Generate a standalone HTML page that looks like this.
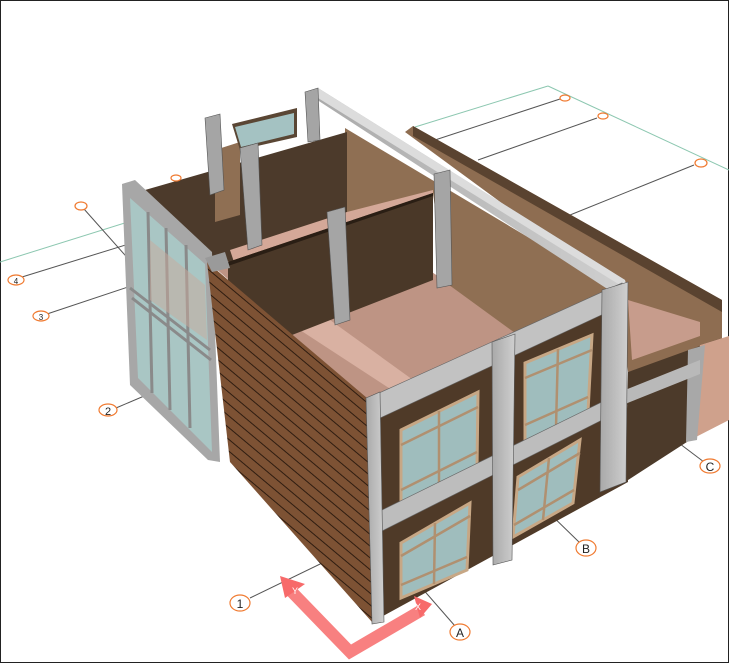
<!DOCTYPE html>
<html><head><meta charset="utf-8"><style>
html,body{margin:0;padding:0;background:#fff;}
svg{display:block}
text{font-family:"Liberation Sans",sans-serif;}
</style></head><body>
<svg width="729" height="663" viewBox="0 0 729 663" xmlns="http://www.w3.org/2000/svg">
<defs>
<pattern id="brick" patternUnits="userSpaceOnUse" width="10" height="9" patternTransform="rotate(40)">
<rect width="10" height="9" fill="#7d5234"/>
<line x1="0" y1="0.5" x2="10" y2="0.5" stroke="#2e1c10" stroke-width="1"/>
</pattern>
<linearGradient id="conc" x1="0" y1="0" x2="1" y2="0"><stop offset="0" stop-color="#a9a9a9"/><stop offset="1" stop-color="#cfcfcf"/></linearGradient>
</defs>
<rect x="0.5" y="0.5" width="728" height="662" fill="#fff" stroke="#222"/>
<g stroke="#8cc7b0" stroke-width="1" fill="none">
<line x1="0" y1="262" x2="128" y2="222"/>
<line x1="415" y1="127" x2="548" y2="86"/>
<line x1="548" y1="86" x2="729" y2="170"/>
</g>
<g stroke="#555" stroke-width="1" fill="none">
<line x1="22" y1="277" x2="132" y2="243"/>
<line x1="47" y1="314" x2="140" y2="283"/>
<line x1="116" y1="408" x2="170" y2="385"/>
<line x1="84" y1="209" x2="140" y2="272"/>
<line x1="560" y1="99" x2="435" y2="140"/>
<line x1="597" y1="118" x2="478" y2="160"/>
<line x1="694" y1="165" x2="570" y2="215"/>
<line x1="250" y1="598" x2="380" y2="535"/>
<line x1="455" y1="626" x2="380" y2="540"/>
<line x1="580" y1="543" x2="505" y2="470"/>
<line x1="704" y1="462" x2="615" y2="395"/>
</g>
<polygon points="405,132 413,126 722,300 722,345 628,372 620,290" fill="#8e6d51"/>
<polygon points="413,126 722,300 722,312 413,136" fill="#5a4330"/>
<polygon points="628,300 700,322 700,336 632,360" fill="#c79c8c"/>
<polygon points="628,372 722,338 700,345 690,440 625,482" fill="#4c3a2a"/>
<polygon points="700,345 729,336 729,420 690,440" fill="#cfa18c"/>
<polygon points="688,350 705,345 697,440 686,442" fill="#a8a8a8"/>
<polygon points="625,390 700,360 700,374 625,404" fill="#b9b9b9"/>
<polygon points="208,262 345,215 520,330 368,400" fill="#be9484"/>
<polygon points="300,330 330,320 420,385 395,392" fill="#d9b1a2"/>
<polygon points="345,128 620,292 515,333 445,282 433,193 345,218" fill="#8f6f53"/>
<polygon points="145,190 347,132 347,212 232,262 150,250" fill="#4c3a2b"/>
<polygon points="215,150 240,142 240,215 215,222" fill="#8f6f53"/>
<polygon points="232,124 297,108 297,137 240,150" fill="#5a4634"/>
<polygon points="235,127 294,113 294,134 241,147" fill="#a4c2c2"/>
<polygon points="230,250 347,212 433,190 433,205 235,265" fill="#d4a898"/>
<polygon points="228,262 433,193 433,280 292,335 228,330" fill="#4a3828"/>
<polygon points="228,262 433,193 433,196 228,266" fill="#2a1e14"/>
<polygon points="305,92 318,88 625,280 612,292" fill="url(#conc)"/>
<polygon points="318,88 625,280 628,290 318,98" fill="#dcdcdc"/>
<g fill="#a5a5a5" stroke="#555" stroke-width="0.6">
<polygon points="205,118 220,114 224,190 210,195"/>
<polygon points="240,148 258,143 262,245 248,250"/>
<polygon points="305,92 318,88 320,140 308,142"/>
<polygon points="327,212 345,207 350,320 335,325"/>
<polygon points="434,174 450,170 452,285 437,288"/>
</g>
<polygon points="122,184 135,180 212,252 220,462 208,460 130,385" fill="#a7a7a7"/>
<polygon points="130,198 205,264 212,452 138,378" fill="#a9c6c4"/>
<g stroke="#8a8a8a" stroke-width="3" fill="none">
<line x1="148" y1="212" x2="152" y2="393"/>
<line x1="166" y1="228" x2="170" y2="410"/>
<line x1="186" y1="245" x2="190" y2="428"/>
<line x1="130" y1="288" x2="210" y2="350"/>
<line x1="132" y1="298" x2="211" y2="360"/>
</g>
<polygon points="150,240 205,285 207,340 150,300" fill="#c9a99c" opacity="0.5"/>
<polygon points="207,262 367,398 372,622 230,462" fill="url(#brick)"/>
<polygon points="205,258 225,252 230,268 212,272" fill="#9a9a9a"/>
<polygon points="368,400 625,285 628,482 372,622" fill="#4f3a28"/>
<g stroke="#c7a785" stroke-width="3" fill="#9fbdbd">
<polygon points="401,430 478,392 477,468 401,508"/>
<polygon points="525,363 592,335 588,412 525,442"/>
<polygon points="401,543 470,503 467,570 401,598"/>
<polygon points="518,477 580,440 573,503 513,537"/>
</g>
<g stroke="#b09070" stroke-width="2.5">
<line x1="439" y1="411" x2="439" y2="488"/><line x1="401" y1="445" x2="478" y2="407"/><line x1="401" y1="490" x2="477" y2="452"/>
<line x1="558" y1="349" x2="556" y2="427"/><line x1="525" y1="378" x2="592" y2="350"/><line x1="525" y1="425" x2="588" y2="397"/>
<line x1="435" y1="523" x2="434" y2="584"/><line x1="401" y1="556" x2="470" y2="516"/><line x1="401" y1="585" x2="467" y2="557"/>
<line x1="549" y1="458" x2="543" y2="520"/><line x1="518" y1="490" x2="580" y2="453"/><line x1="514" y1="525" x2="574" y2="490"/>
</g>
<polygon points="368,398 622,283 625,304 380,418" fill="#c2c2c2" stroke="#666" stroke-width="0.6"/>
<polygon points="378,512 610,398 610,416 380,532" fill="#bdbdbd" stroke="#666" stroke-width="0.6"/>
<g fill="url(#conc)" stroke="#555" stroke-width="0.6">
<polygon points="366,398 380,392 384,622 372,624"/>
<polygon points="492,342 515,334 512,560 493,565"/>
<polygon points="602,290 628,282 626,482 600,492"/>
</g>
<g fill="#fff" stroke="#f07a30" stroke-width="1.2">
<ellipse cx="16" cy="280" rx="8" ry="5"/>
<ellipse cx="41" cy="316" rx="8" ry="5"/>
<ellipse cx="108" cy="410" rx="9" ry="6"/>
<ellipse cx="81" cy="206" rx="6" ry="4"/>
<ellipse cx="176" cy="178" rx="5" ry="3"/>
<ellipse cx="565" cy="98" rx="5" ry="3"/>
<ellipse cx="603" cy="116" rx="5" ry="3"/>
<ellipse cx="701" cy="163" rx="6" ry="4"/>
<ellipse cx="240" cy="603" rx="10" ry="8"/>
<ellipse cx="460" cy="632" rx="10" ry="8"/>
<ellipse cx="586" cy="548" rx="10" ry="8"/>
<ellipse cx="710" cy="466" rx="10" ry="7"/>
</g>
<g font-size="12" fill="#222" text-anchor="middle">
<text x="16" y="284" font-size="8">4</text>
<text x="41" y="320" font-size="8">3</text>
<text x="108" y="415" font-size="11">2</text>
<text x="240" y="608">1</text>
<text x="460" y="637">A</text>
<text x="586" y="553">B</text>
<text x="710" y="471">C</text>
</g>
<g stroke="#f76a6a" stroke-width="12" fill="none" opacity="0.85">
<polyline points="290,590 350,652 422,610"/>
</g>
<polygon points="280,576 305,584 285,598" fill="#f76a6a"/>
<polygon points="432,604 414,596 420,618" fill="#f76a6a"/>
<text x="292" y="594" font-size="9" fill="#fff">Y</text>
<text x="415" y="610" font-size="9" fill="#fff">X</text>
</svg>
</body></html>
